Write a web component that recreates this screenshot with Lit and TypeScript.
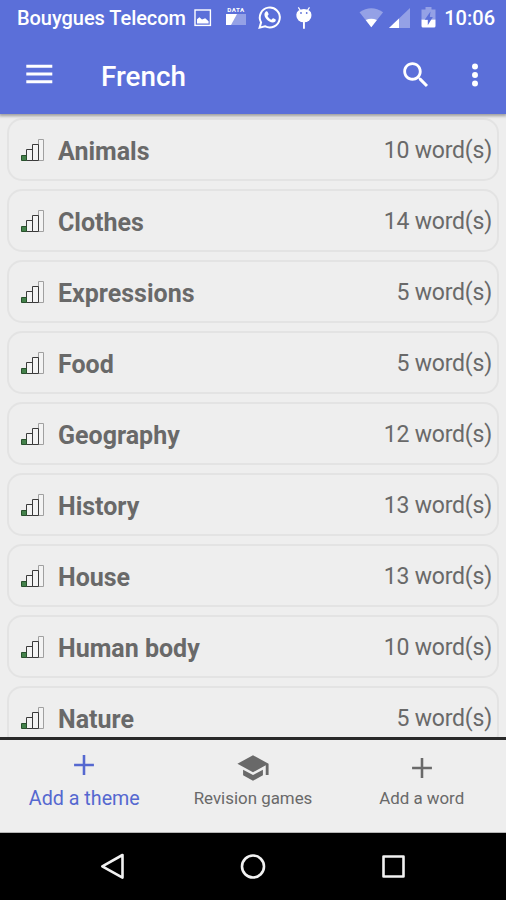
import { LitElement, html, css, svg } from "lit";
import { customElement, property } from "lit/decorators.js";

const themes: [string, number][] = [
  ["Animals", 10],
  ["Clothes", 14],
  ["Expressions", 5],
  ["Food", 5],
  ["Geography", 12],
  ["History", 13],
  ["House", 13],
  ["Human body", 10],
  ["Nature", 5],
];

const plus = svg`<path d="M19 12.9h-6.100V19h-1.800v-6.100H5v-1.800h6.100V5h1.800v6.100H19z"/>`;
const school = svg`<path d="M5 13.18v4L12 21l7-3.82v-4L12 17l-7-3.82zM12 3L1 9l11 6 9-4.91V17h2V9L12 3z"/>`;

@customElement("status-bar")
class StatusBar extends LitElement {
  static styles = css`
    :host { display: flex; align-items: flex-start; height: 38px; padding: 0 11px 0 17px; box-sizing: border-box; color: #fff; }
    .text { font-weight: 500; font-size: 20px; line-height: 37px; white-space: nowrap; }
    .carrier { width: 177px; letter-spacing: -0.05px; }
    .time { margin-left: auto; }
    svg { display: block; flex: none; height: 38px; fill: #fff; }
    .notices { width: 126px; }
    .system { width: 116px; }
    .line { fill: none; stroke: #fff; }
    .dim { fill: #fff; opacity: 0.35; }
    .data { font: 700 6.2px Roboto, sans-serif; letter-spacing: 0.5px; }
    .hole { fill: #5b6fd9; }
  `;
  render() {
    return html`
      <span class="text carrier">Bouygues Telecom</span>
      <svg class="notices" viewBox="194 0 126 38">
        <rect class="line" x="195" y="10" width="15.4" height="15.4" stroke-width="1.4"/>
        <path d="M197 23.400v-4.200l2.400-2 2.600 2.200 3.200-1.200 3.400 3v2.200z"/>
        <text class="data" x="227.2" y="11.8">DATA</text>
        <path class="dim" d="M226 14h20v11h-20z"/>
        <path d="M226 14h11l-6 11h-5z"/>
        <path class="line" stroke-width="2" d="M259.600 27.600l1.500-5.200a10 10 0 1 1 3.800 3.800z"/>
        <path d="M265.600 11.800c.7-.6 1.700-.6 2.100.2l.9 2.100c.2.7-.7 1.300-1.100 1.800.9 1.900 2.200 3.100 4 3.800.6-.4 1.100-1.600 1.800-1.400l2.100 1c.7.4.3 1.900-.4 2.500-1.500 1.300-3.600.9-6-.5-2.100-1.300-3.500-3-4.200-4.800-.7-1.900-.4-3.700.8-4.700z"/>
        <path class="line" stroke-width="1.2" d="M298.300 7.300l2 3M309.500 7.300l-2 3"/>
        <path d="M296.400 14.500a7.500 5.600 0 0 1 15 0v1.500a7.500 6.300 0 0 1-15 0z"/>
        <path d="M303 21h1.900v7.800H303z"/>
        <circle class="hole" cx="301" cy="13" r=".9"/><circle class="hole" cx="306.700" cy="13" r=".9"/>
      </svg>
      <svg class="system" viewBox="320 0 116 38">
        <path class="dim" d="M359.500 12.300Q371.300 4 383.100 12.300L371.300 27.300z"/>
        <path d="M365.700 20q5.600-2.700 11.200 0l-5.600 7.300z"/>
        <path class="dim" d="M410 8v20h-21z"/>
        <path d="M399 18.500V28h-10z"/>
        <path class="dim" d="M421.500 9.500h4V7h6v2.500h4V19.500h-14z"/>
        <path d="M421.500 19.500h14V26q0 1.500-1.500 1.500h-11q-1.500 0-1.500-1.500z"/>
        <path class="hole" d="M430.500 11.500l-5.800 8.300h3.100v5.400l5-8.200h-3z"/>
      </svg>
      <span class="text time">10:06</span>
    `;
  }
}

@customElement("tool-bar")
class ToolBar extends LitElement {
  static styles = css`
    :host { display: flex; align-items: center; height: 76px; padding: 0 14px 3px 22px; box-sizing: border-box; color: #fff; }
    svg { width: 34px; height: 34px; fill: #fff; flex: none; }
    h1 { flex: 1; margin: 0 0 0 45px; font-weight: 500; font-size: 27.8px; line-height: 36px; padding-top: 5px; }
    .more { margin-left: 25px; }
  `;
  render() {
    return html`
      <svg viewBox="0 0 34 34"><path d="M4.300 6.800h26v3H4.300zM4.300 14.500h26v3H4.300zM4.300 22.200h26v3H4.300z"/></svg>
      <h1>French</h1>
      <svg viewBox="0 0 24 24"><path d="M15.500 14h-.79l-.28-.27C15.410 12.590 16 11.110 16 9.500 16 5.910 13.090 3 9.500 3S3 5.910 3 9.500 5.910 16 9.500 16c1.610 0 3.090-.59 4.230-1.570l.27.28v.79l5 4.990L20.490 19l-4.990-5zm-6 0C7.010 14 5 11.990 5 9.500S7.010 5 9.500 5 14 7.010 14 9.500 11.990 14 9.500 14z"/></svg>
      <svg class="more" viewBox="0 0 24 24"><circle cx="12" cy="6" r="2.100"/><circle cx="12" cy="12" r="2.100"/><circle cx="12" cy="18" r="2.100"/></svg>
    `;
  }
}

@customElement("theme-card")
class ThemeCard extends LitElement {
  @property() name = "";
  @property({ type: Number }) count = 0;
  static styles = css`
    :host { display: flex; align-items: center; flex: none; height: 63px; box-sizing: border-box; padding: 0 5px 0 12px; border: 2px solid #e3e3e3; border-radius: 15px; color: #696969; }
    svg { width: 24px; height: 24px; flex: none; }
    .bars { fill: #f3f3f3; stroke: #3a3a3a; }
    .level { fill: #43814a; stroke: #28502c; }
    .last { fill: #f3f3f3; stroke: #a0a0a0; }
    .name { flex: 1; margin-left: 13px; font-weight: 700; font-size: 25px; line-height: 30px; padding-top: 4px; }
    .count { font-size: 23px; letter-spacing: -0.2px; line-height: 30px; padding-top: 2px; }
  `;
  render() {
    return html`
      <svg viewBox="0 0 24 24">
        <path class="last" d="M17.500 1.500h5v21h-5z"/>
        <path class="bars" d="M5.500 11.500h6v11h-6zM11.500 6.500h6v16h-6z"/>
        <path class="level" d="M.5 17.500h5v5h-5z"/>
      </svg>
      <span class="name">${this.name}</span>
      <span class="count">${this.count} word(s)</span>
    `;
  }
}

@customElement("app-root")
class AppRoot extends LitElement {
  static styles = css`
    :host { display: flex; flex-direction: column; height: 900px; overflow: hidden; background: #eee; font-family: Roboto, sans-serif; }
    header { flex: none; height: 114px; background: #5b6fd9; box-shadow: 0 1px 3px 1px rgba(0, 0, 0, 0.35); z-index: 1; }
    main { flex: 1; min-height: 0; overflow: hidden; display: flex; flex-direction: column; gap: 8px; padding: 4px 7px 0; }
    .tabs { flex: none; height: 96px; box-sizing: border-box; display: grid; grid-template-columns: repeat(3, 1fr); border-top: 3px solid #292929; border-bottom: 1px solid #b5b5b5; color: #696969; }
    .tab { display: flex; flex-direction: column; align-items: center; padding-top: 11px; font-size: 16.900px; line-height: 24px; white-space: nowrap; }
    .tab svg { width: 34px; height: 34px; fill: currentColor; flex: none; }
    .tab span { margin-top: 1px; }
    .active { color: #5568d0; font-size: 19.700px; padding-top: 8px; }
    .active span { margin-top: 5px; }
    footer { flex: none; height: 67px; background: #000; display: grid; grid-template-columns: repeat(3, 140.500px); justify-content: center; place-items: center; }
    footer svg { width: 32px; height: 32px; fill: none; stroke: #f2f2f2; stroke-width: 2.600; stroke-linejoin: round; }
  `;
  render() {
    return html`
      <header><status-bar></status-bar><tool-bar></tool-bar></header>
      <main>${themes.map(([n, c]) => html`<theme-card .name=${n} .count=${c}></theme-card>`)}</main>
      <nav class="tabs">
        <div class="tab active"><svg viewBox="0 0 24 24">${plus}</svg><span>Add a theme</span></div>
        <div class="tab"><svg viewBox="0 0 24 24">${school}</svg><span>Revision games</span></div>
        <div class="tab"><svg viewBox="0 0 24 24">${plus}</svg><span>Add a word</span></div>
      </nav>
      <footer>
        <svg viewBox="0 0 32 32"><path d="M25.500 4v22.600L5.300 15.300z"/></svg>
        <svg viewBox="0 0 32 32"><circle cx="16" cy="15.500" r="11"/></svg>
        <svg viewBox="0 0 32 32"><rect x="5.500" y="5.500" width="20" height="20"/></svg>
      </footer>
    `;
  }
}
